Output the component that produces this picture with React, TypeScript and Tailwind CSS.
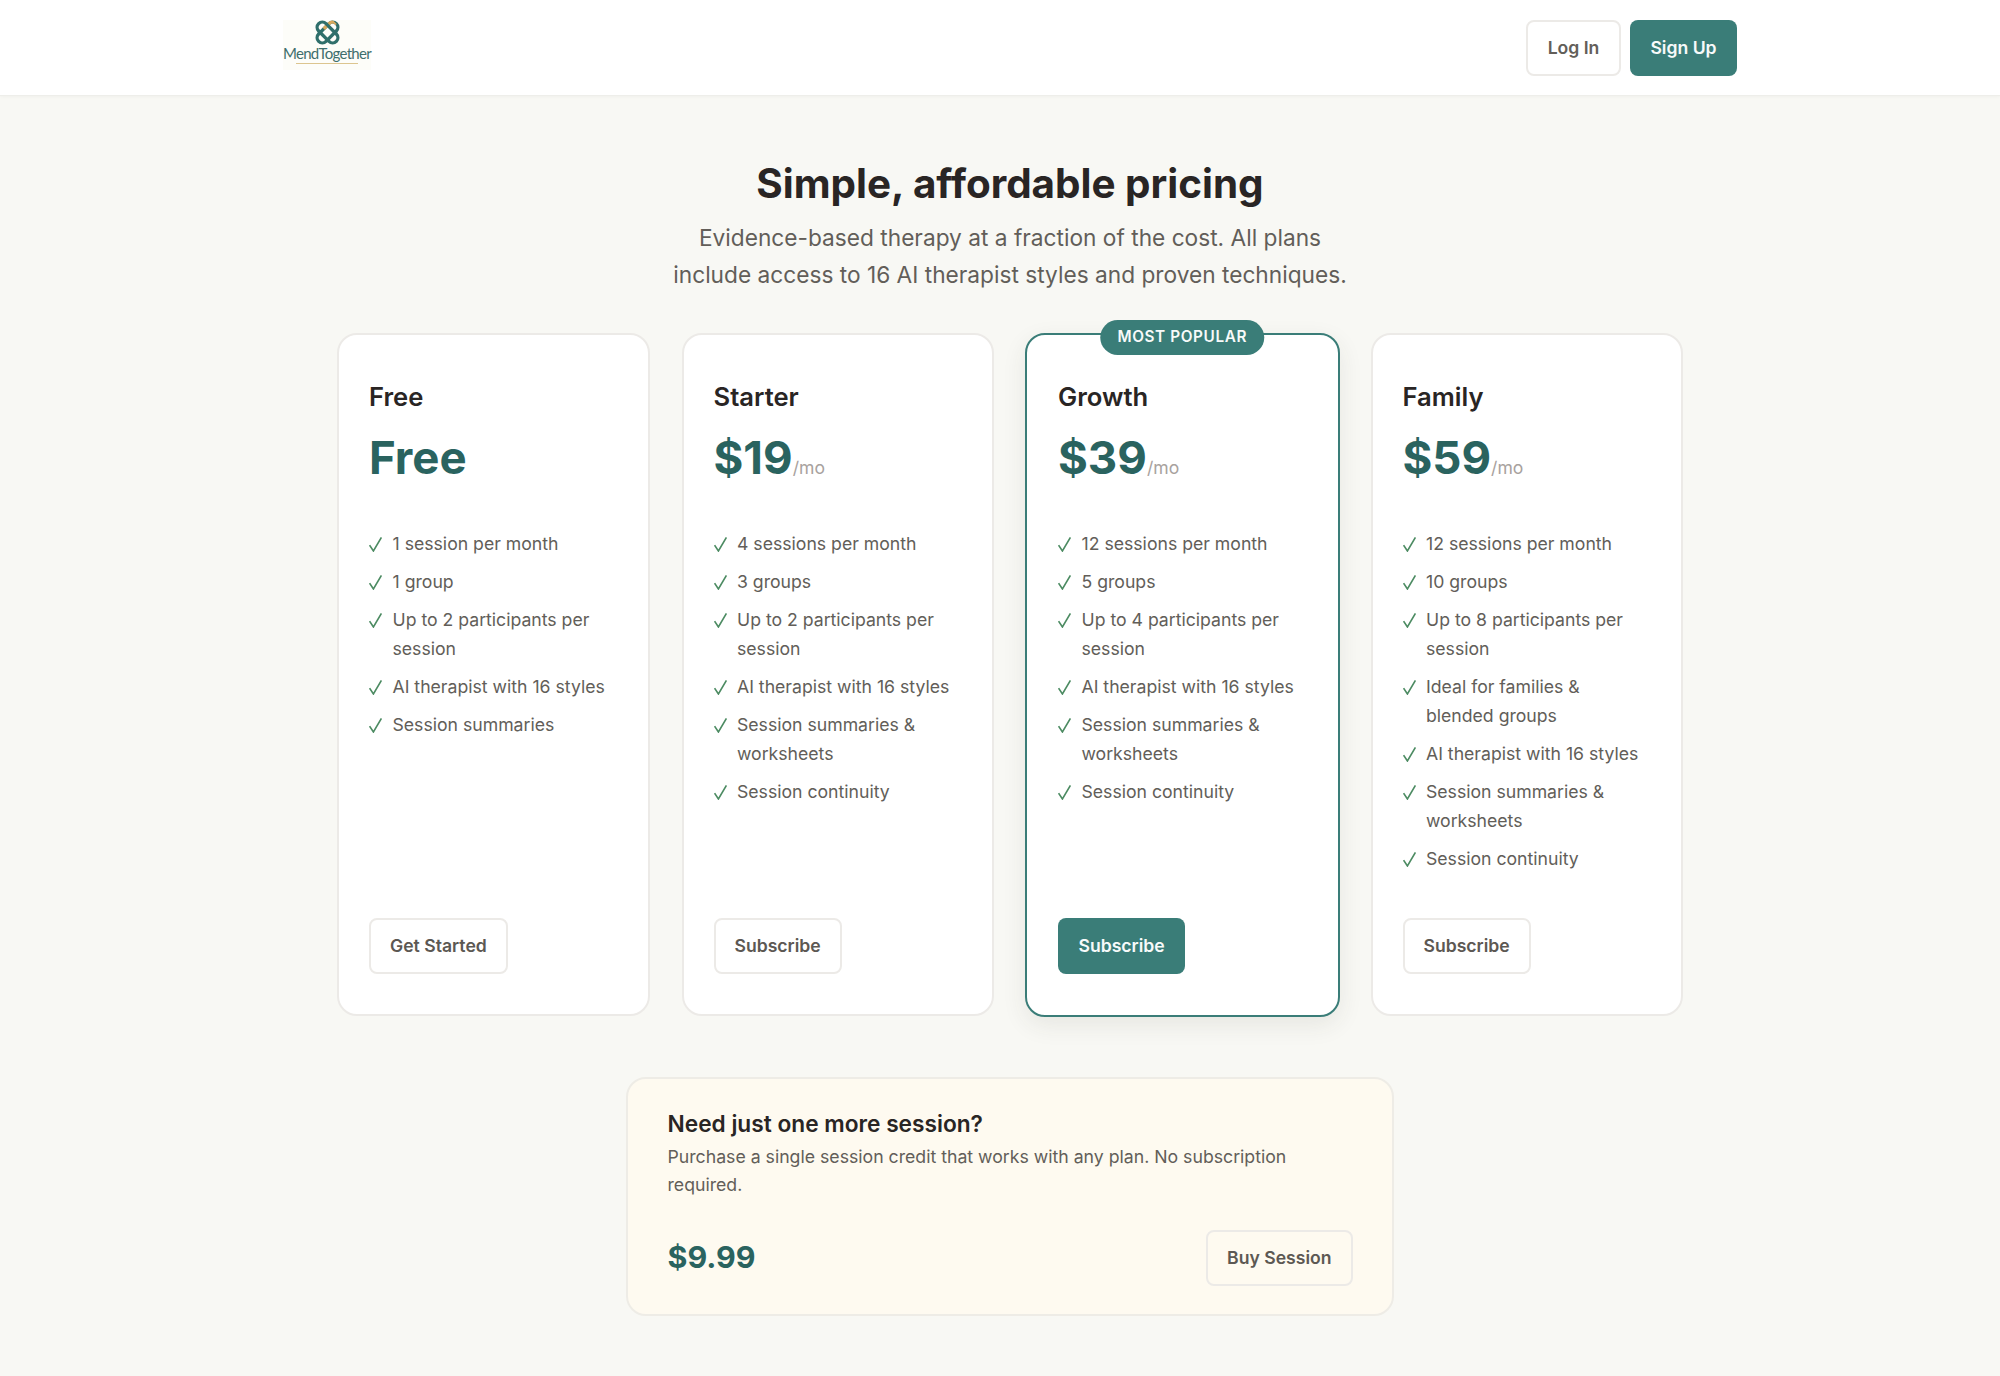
import React from 'react';

type Plan = {
  name: string;
  price: string;
  perMonth?: boolean;
  features: string[];
  cta: string;
  popular?: boolean;
};

const plans: Plan[] = [
  {
    name: 'Free',
    price: 'Free',
    features: ['1 session per month', '1 group', 'Up to 2 participants per session', 'AI therapist with 16 styles', 'Session summaries'],
    cta: 'Get Started',
  },
  {
    name: 'Starter',
    price: '$19',
    perMonth: true,
    features: ['4 sessions per month', '3 groups', 'Up to 2 participants per session', 'AI therapist with 16 styles', 'Session summaries & worksheets', 'Session continuity'],
    cta: 'Subscribe',
  },
  {
    name: 'Growth',
    price: '$39',
    perMonth: true,
    popular: true,
    features: ['12 sessions per month', '5 groups', 'Up to 4 participants per session', 'AI therapist with 16 styles', 'Session summaries & worksheets', 'Session continuity'],
    cta: 'Subscribe',
  },
  {
    name: 'Family',
    price: '$59',
    perMonth: true,
    features: ['12 sessions per month', '10 groups', 'Up to 8 participants per session', 'Ideal for families & blended groups', 'AI therapist with 16 styles', 'Session summaries & worksheets', 'Session continuity'],
    cta: 'Subscribe',
  },
];

const outlineBtn = 'h-[56px] px-[19px] rounded-lg border-2 border-[#eceae7] text-[17.6px] font-semibold text-[#5c5853]';
const solidBtn = 'h-[56px] px-[20.5px] rounded-lg bg-[#3a7d78] text-[17.6px] font-semibold text-[#f7fafa]';

const Logo: React.FC = () => (
  <div className="flex flex-col items-center w-[88px] h-[50px] bg-[#fdfdf9]">
    <svg className="w-[25px] h-[25px]" viewBox="0 0 24 24" fill="none" strokeWidth={3.2}>
      <defs>
        <clipPath id="logo-gold">
          <rect x="12" y="0" width="12" height="12.5" />
        </clipPath>
      </defs>
      <rect x="0" y="7" width="24" height="10" rx="5" stroke="#2f6f6b" transform="rotate(-45 12 12)" />
      <rect x="0" y="7" width="24" height="10" rx="5" stroke="#d9a95b" transform="rotate(-45 12 12)" clipPath="url(#logo-gold)" />
      <rect x="0" y="7" width="24" height="10" rx="5" stroke="#2f6f6b" transform="rotate(45 12 12)" />
    </svg>
    <span className="font-['Lato',sans-serif] text-[15px] leading-[16px] tracking-[-0.7px] text-[#3f6f6d]">MendTogether</span>
    <span className="mt-[2px] w-[62px] h-px bg-[#dcc58f]" />
  </div>
);

const Check: React.FC = () => (
  <svg className="absolute left-0 top-[7px] w-[13px] h-[15px]" viewBox="0 0 13 15" fill="none" stroke="#4c8b62" strokeWidth={1.6}>
    <path d="M0.6 8.2 L4.4 14 L12.4 0.4" />
  </svg>
);

const PlanCard: React.FC<{ plan: Plan }> = ({ plan }) => (
  <div
    className={`relative flex flex-col rounded-[20px] border-2 bg-white ${
      plan.popular
        ? '-mx-[1px] -mt-[0.5px] h-[684px] pt-[43.5px] px-[31px] pb-[40.5px] border-[#3a7d78] shadow-[0_8px_24px_rgba(60,60,40,0.09)]'
        : 'h-[683px] pt-[43px] px-[30px] pb-[40px] border-[#eceae7]'
    }`}
  >
    {plan.popular && (
      <div className="absolute top-[-14.5px] left-1/2 -translate-x-1/2 h-[35px] px-[17px] flex items-center rounded-full bg-[#3a7d78] text-[15.3px] font-semibold tracking-[0.6px] text-[#f7fafa] whitespace-nowrap">
        MOST POPULAR
      </div>
    )}
    <h3 className="text-[25.6px] leading-[38px] font-semibold text-[#292524]">{plan.name}</h3>
    <div className="mt-[8.5px] flex items-baseline h-[66px] leading-[66px]">
      <span className="text-[45.6px] font-bold text-[#2a635f]">{plan.price}</span>
      {plan.perMonth && <span className="text-[17.6px] text-[#a8a29e]">/mo</span>}
    </div>
    <ul className="mt-[39.5px] flex flex-col gap-[9.6px] flex-1">
      {plan.features.map((f) => (
        <li key={f} className="relative pl-[23.5px] text-[17.65px] leading-[28.6px] text-[#625e59]">
          <Check />
          {f}
        </li>
      ))}
    </ul>
    <div>
      <button className={plan.popular ? solidBtn : outlineBtn}>{plan.cta}</button>
    </div>
  </div>
);

const App: React.FC = () => (
  <div className="min-h-[1376px] bg-[#f8f8f4] font-['Inter',sans-serif]">
    <header className="h-[96px] bg-white border-b border-[#eeeeea] shadow-[0_1px_3px_rgba(0,0,0,0.03)] pl-[283px] pr-[263px] flex items-start justify-between">
      <div className="mt-[20px]">
        <Logo />
      </div>
      <div className="mt-[20px] flex gap-[9px]">
        <button className="h-[56px] w-[95px] rounded-lg border-2 border-[#eceae7] bg-white text-[17.6px] font-semibold text-[#625e59]">Log In</button>
        <button className="h-[56px] w-[107px] rounded-lg bg-[#3a7d78] text-[17.6px] font-semibold text-[#f7fafa]">Sign Up</button>
      </div>
    </header>

    <main className="ml-5 flex flex-col items-center">
      <h1 className="mt-[59.5px] text-[40.4px] leading-[56px] font-bold text-[#292524]">Simple, affordable pricing</h1>
      <p className="mt-[7.5px] w-[690px] text-center text-[22.7px] leading-[37px] text-[#625e59]">
        Evidence-based therapy at a fraction of the cost. All plans include access to 16 AI therapist styles and proven techniques.
      </p>

      <div className="mt-[40px] w-[1346px] grid grid-cols-4 gap-[32px]">
        {plans.map((p) => (
          <PlanCard key={p.name} plan={p} />
        ))}
      </div>

      <section className="mt-[60.5px] w-[768px] h-[239px] rounded-[20px] border-2 border-[#eeece6] bg-[#fefaf0] px-[39.5px] pt-[26.5px]">
        <h3 className="text-[22.7px] leading-[36px] font-semibold text-[#292524]">Need just one more session?</h3>
        <p className="mt-[1px] text-[17.68px] leading-[28.6px] text-[#625e59]">Purchase a single session credit that works with any plan. No subscription required.</p>
        <div className="mt-[30.5px] flex items-center justify-between">
          <span className="text-[30.4px] font-bold text-[#2a635f]">$9.99</span>
          <button className={outlineBtn}>Buy Session</button>
        </div>
      </section>
    </main>
  </div>
);

export default App;
